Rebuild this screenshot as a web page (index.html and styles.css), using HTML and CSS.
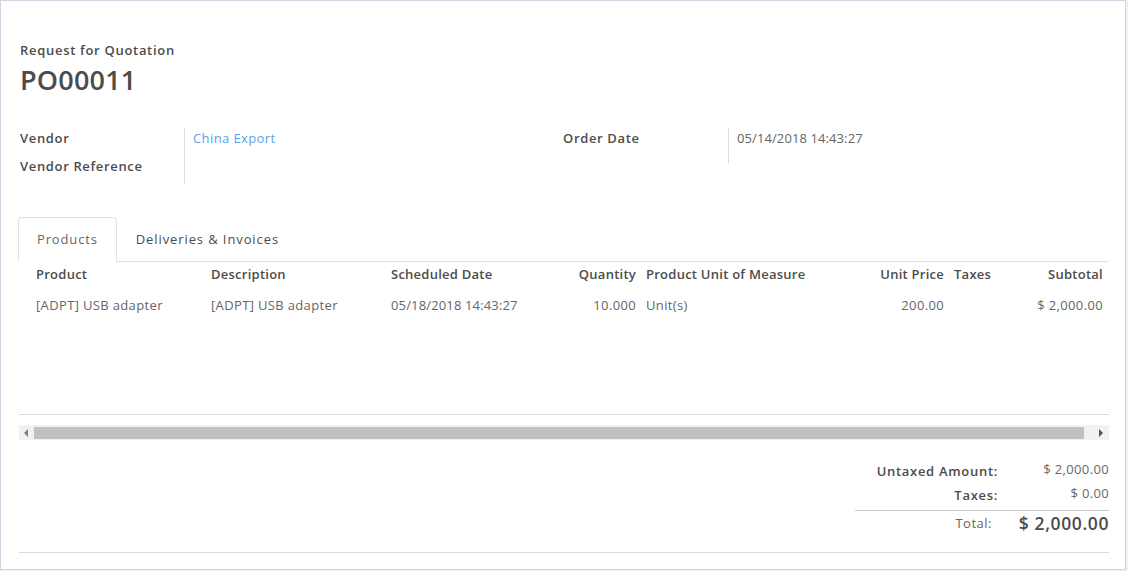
FILE: index.html
```html
<!DOCTYPE html>
<html lang="en">
<head>
<meta charset="utf-8">
<title>PO00011 - Request for Quotation</title>
<link rel="stylesheet" href="styles.css">
</head>
<body>
<div class="sheet">
  <div class="title-block">
    <div class="subtitle">Request for Quotation</div>
    <h1 class="title">PO00011</h1>
  </div>

  <div class="groups">
    <div class="group">
      <div class="label">Vendor</div>
      <div class="value link">China Export</div>
      <div class="label">Vendor Reference</div>
      <div class="value"></div>
    </div>
    <div class="group group-right">
      <div class="label">Order Date</div>
      <div class="value date">05/14/2018 14:43:27</div>
    </div>
  </div>

  <div class="tabs">
    <div class="tab active">Products</div>
    <div class="tab">Deliveries &amp; Invoices</div>
  </div>

  <div class="list">
    <table class="lines">
      <colgroup>
        <col class="c-product"><col class="c-desc"><col class="c-date"><col class="c-qty">
        <col class="c-uom"><col class="c-price"><col class="c-taxes"><col class="c-sub">
      </colgroup>
      <thead>
        <tr>
          <th class="first">Product</th>
          <th>Description</th>
          <th>Scheduled Date</th>
          <th class="num">Quantity</th>
          <th>Product Unit of Measure</th>
          <th class="num">Unit Price</th>
          <th>Taxes</th>
          <th class="num">Subtotal</th>
        </tr>
      </thead>
      <tbody>
        <tr>
          <td class="first">[ADPT] USB adapter</td>
          <td>[ADPT] USB adapter</td>
          <td class="date">05/18/2018 14:43:27</td>
          <td class="num">10.000</td>
          <td>Unit(s)</td>
          <td class="num">200.00</td>
          <td></td>
          <td class="num">$ 2,000.00</td>
        </tr>
      </tbody>
    </table>
  </div>

  <div class="hscroll">
    <div class="arrow-box left"><span class="tri tri-left"></span></div>
    <div class="thumb"></div>
    <div class="arrow-box right"><span class="tri tri-right"></span></div>
  </div>

  <div class="totals-wrap">
    <div class="totals">
      <div class="t-label">Untaxed Amount:</div>
      <div class="t-value">$ 2,000.00</div>
      <div class="t-label sep">Taxes:</div>
      <div class="t-value sep">$ 0.00</div>
      <div class="t-label total-label">Total:</div>
      <div class="t-value total-value">$ 2,000.00</div>
    </div>
  </div>
</div>
</body>
</html>
```

FILE: styles.css
```css
* { box-sizing: border-box; }

html, body {
  margin: 0;
  padding: 0;
}

body {
  background: #efeff4;
  font-family: "Open Sans", "Liberation Sans", sans-serif;
  font-size: 13px;
  color: #4c4c4c;
  width: 1128px;
  height: 571px;
  overflow: hidden;
}

.sheet {
  width: 1126px;
  height: 570px;
  background: #fff;
  border: 1px solid #d4d3e2;
  padding: 39px 16px 0 18px;
}

.title-block {
  padding-left: 1px;
}

.subtitle {
  font-size: 13px;
  line-height: 20px;
  font-weight: 600;
  color: #4c4c4c;
  letter-spacing: 0.7px;
}

.title {
  margin: 2px 0 0;
  font-size: 27px;
  line-height: 36px;
  font-weight: 600;
  color: #4c4c4c;
  letter-spacing: 0.2px;
}

.groups {
  margin-top: 30px;
  display: grid;
  grid-template-columns: 544px 1fr;
}

.group {
  display: grid;
  grid-template-columns: 166px 1fr;
  grid-auto-rows: 28px;
}

.group-right {
  grid-auto-rows: 35px;
}

.label {
  font-weight: 600;
  line-height: 20px;
  padding-left: 1px;
  border-right: 1px solid #dcdcdc;
  color: #4c4c4c;
  letter-spacing: 0.65px;
}

.group-right .label {
  padding-left: 0;
}

.value {
  line-height: 20px;
  padding-left: 8px;
  color: #666;
  letter-spacing: 0.4px;
}

.value.date {
  letter-spacing: 0.1px;
}

.link {
  color: #5aa3ea;
}

.tabs {
  margin-top: 33px;
  display: flex;
  height: 45px;
  border-bottom: 1px solid #dee2e6;
}

.tab {
  padding: 0 18px;
  line-height: 43px;
  border: 1px solid transparent;
  border-radius: 4px 4px 0 0;
  color: #4c4c4c;
  font-size: 13px;
  letter-spacing: 0.9px;
}

.tab.active {
  margin-left: -1px;
  border-color: #dee2e6 #dee2e6 #fff;
  background: #fff;
  margin-bottom: -1px;
  height: 45px;
  color: #666;
  letter-spacing: 0.85px;
}

.list {
  height: 153px;
  border-bottom: 1px solid #dcdcdc;
}

.lines {
  width: 1089px;
  border-collapse: collapse;
  table-layout: fixed;
}

.c-product { width: 187px; }
.c-desc { width: 180px; }
.c-date { width: 155px; }
.c-qty { width: 100px; }
.c-uom { width: 208px; }
.c-price { width: 100px; }
.c-taxes { width: 51px; }
.c-sub { width: 108px; }

.lines th {
  font-weight: 600;
  text-align: left;
  line-height: 20px;
  padding: 2px 5px 2px;
  white-space: nowrap;
  color: #4c4c4c;
  letter-spacing: 0.25px;
}

.lines td {
  line-height: 20px;
  padding: 9px 5px;
  white-space: nowrap;
  color: #666;
  letter-spacing: 0.35px;
}

.lines td.date {
  letter-spacing: 0.15px;
}

.lines .first {
  padding-left: 17px;
}

.lines .num {
  text-align: right;
}

.hscroll {
  margin-top: 10px;
  height: 15px;
  background: #f1f1f1;
  display: flex;
  align-items: stretch;
}

.arrow-box {
  display: flex;
  align-items: center;
}

.arrow-box.left {
  width: 15px;
  padding-left: 5px;
}

.arrow-box.right {
  width: 24px;
  justify-content: flex-end;
  padding-right: 6px;
}

.tri {
  width: 0;
  height: 0;
  border-top: 4px solid transparent;
  border-bottom: 4px solid transparent;
}

.tri-left {
  border-right: 4px solid #808080;
}

.tri-right {
  border-left: 4px solid #505050;
}

.thumb {
  flex: 1;
  margin: 2px 1px 1px 0;
  background: #c1c1c1;
}

.totals-wrap {
  margin-top: 19px;
  display: flex;
  justify-content: flex-end;
  border-bottom: 1px solid #dcdcdc;
  padding-bottom: 17px;
}

.totals {
  width: 254px;
  display: grid;
  grid-template-columns: 143px 111px;
}

.t-label {
  text-align: right;
  font-weight: 600;
  line-height: 24px;
  color: #4c4c4c;
  letter-spacing: 0.7px;
}

.t-value {
  text-align: right;
  line-height: 20px;
  padding-top: 0;
  padding-bottom: 4px;
  color: #666;
  font-size: 13px;
  letter-spacing: 0.35px;
}

.t-label.sep,
.t-value.sep {
  border-bottom: 1px solid #c8c8c8;
  padding-bottom: 3px;
}

.total-label {
  font-weight: 400;
  color: #666;
  padding-right: 6px;
  letter-spacing: 0.5px;
}

.total-value {
  font-size: 17.5px;
  font-weight: 600;
  line-height: 24px;
  padding-top: 0;
  padding-bottom: 0;
  color: #4c4c4c;
  letter-spacing: 0.6px;
}
```
